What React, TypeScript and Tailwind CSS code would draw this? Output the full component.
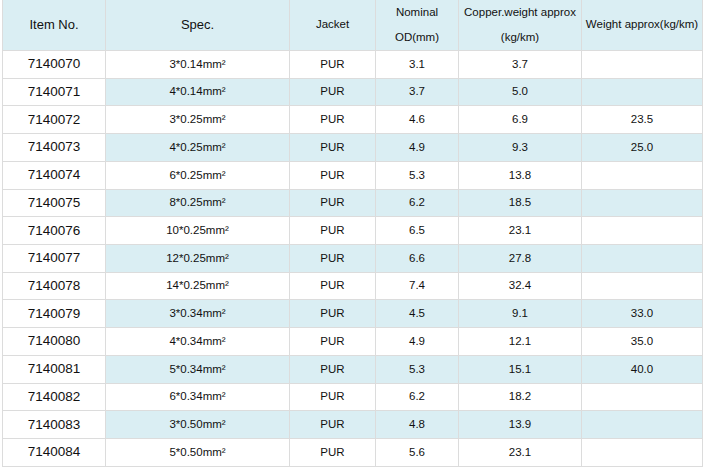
const rows: [string, string, string, string, string, string][] = [
  ['7140070', '3*0.14mm²', 'PUR', '3.1', '3.7', ''],
  ['7140071', '4*0.14mm²', 'PUR', '3.7', '5.0', ''],
  ['7140072', '3*0.25mm²', 'PUR', '4.6', '6.9', '23.5'],
  ['7140073', '4*0.25mm²', 'PUR', '4.9', '9.3', '25.0'],
  ['7140074', '6*0.25mm²', 'PUR', '5.3', '13.8', ''],
  ['7140075', '8*0.25mm²', 'PUR', '6.2', '18.5', ''],
  ['7140076', '10*0.25mm²', 'PUR', '6.5', '23.1', ''],
  ['7140077', '12*0.25mm²', 'PUR', '6.6', '27.8', ''],
  ['7140078', '14*0.25mm²', 'PUR', '7.4', '32.4', ''],
  ['7140079', '3*0.34mm²', 'PUR', '4.5', '9.1', '33.0'],
  ['7140080', '4*0.34mm²', 'PUR', '4.9', '12.1', '35.0'],
  ['7140081', '5*0.34mm²', 'PUR', '5.3', '15.1', '40.0'],
  ['7140082', '6*0.34mm²', 'PUR', '6.2', '18.2', ''],
  ['7140083', '3*0.50mm²', 'PUR', '4.8', '13.9', ''],
  ['7140084', '5*0.50mm²', 'PUR', '5.6', '23.1', ''],
];

export default function App() {
  return (
    <div className="w-[704px] h-[469px] overflow-hidden bg-white pl-[2px] font-['Liberation_Sans',Arial,sans-serif] text-[#111]">
      <table className="w-[700px] table-fixed border-collapse">
        <colgroup>
          <col className="w-[103px]" />
          <col className="w-[184px]" />
          <col className="w-[86px]" />
          <col className="w-[83px]" />
          <col className="w-[123px]" />
          <col className="w-[121px]" />
        </colgroup>
        <thead>
          <tr className="h-[50px] bg-[#daeef3] text-center">
            <th className="border border-t-0 border-[#dcdcdc] text-[13px] font-normal">Item No.</th>
            <th className="border border-t-0 border-[#dcdcdc] text-[13px] font-normal">Spec.</th>
            <th className="border border-t-0 border-[#dcdcdc] text-[11.5px] font-normal">Jacket</th>
            <th className="border border-t-0 border-[#dcdcdc] text-[11.5px] font-normal leading-[25px]">
              Nominal
              <br />
              OD(mm)
            </th>
            <th className="border border-t-0 border-[#dcdcdc] text-[11.5px] font-normal leading-[25px] whitespace-nowrap">
              Copper.weight approx
              <br />
              (kg/km)
            </th>
            <th className="border border-t-0 border-[#dcdcdc] text-[11.5px] font-normal whitespace-nowrap">
              Weight approx(kg/km)
            </th>
          </tr>
        </thead>
        <tbody>
          {rows.map((r, i) => {
            const stripe = i % 2 === 1 ? 'bg-[#daeef3]' : 'bg-white';
            return (
              <tr key={r[0]} className="h-[27.73px] text-center">
                <td className="border border-[#dcdcdc] bg-white text-[13.5px]">{r[0]}</td>
                <td className={`border border-[#dcdcdc] text-[11.5px] ${stripe}`}>{r[1]}</td>
                <td className={`border border-[#dcdcdc] text-[11.5px] ${stripe}`}>{r[2]}</td>
                <td className={`border border-[#dcdcdc] text-[11.5px] ${stripe}`}>{r[3]}</td>
                <td className={`border border-[#dcdcdc] text-[11.5px] ${stripe}`}>{r[4]}</td>
                <td className={`border border-[#dcdcdc] text-[11.5px] ${stripe}`}>{r[5]}</td>
              </tr>
            );
          })}
        </tbody>
      </table>
    </div>
  );
}
